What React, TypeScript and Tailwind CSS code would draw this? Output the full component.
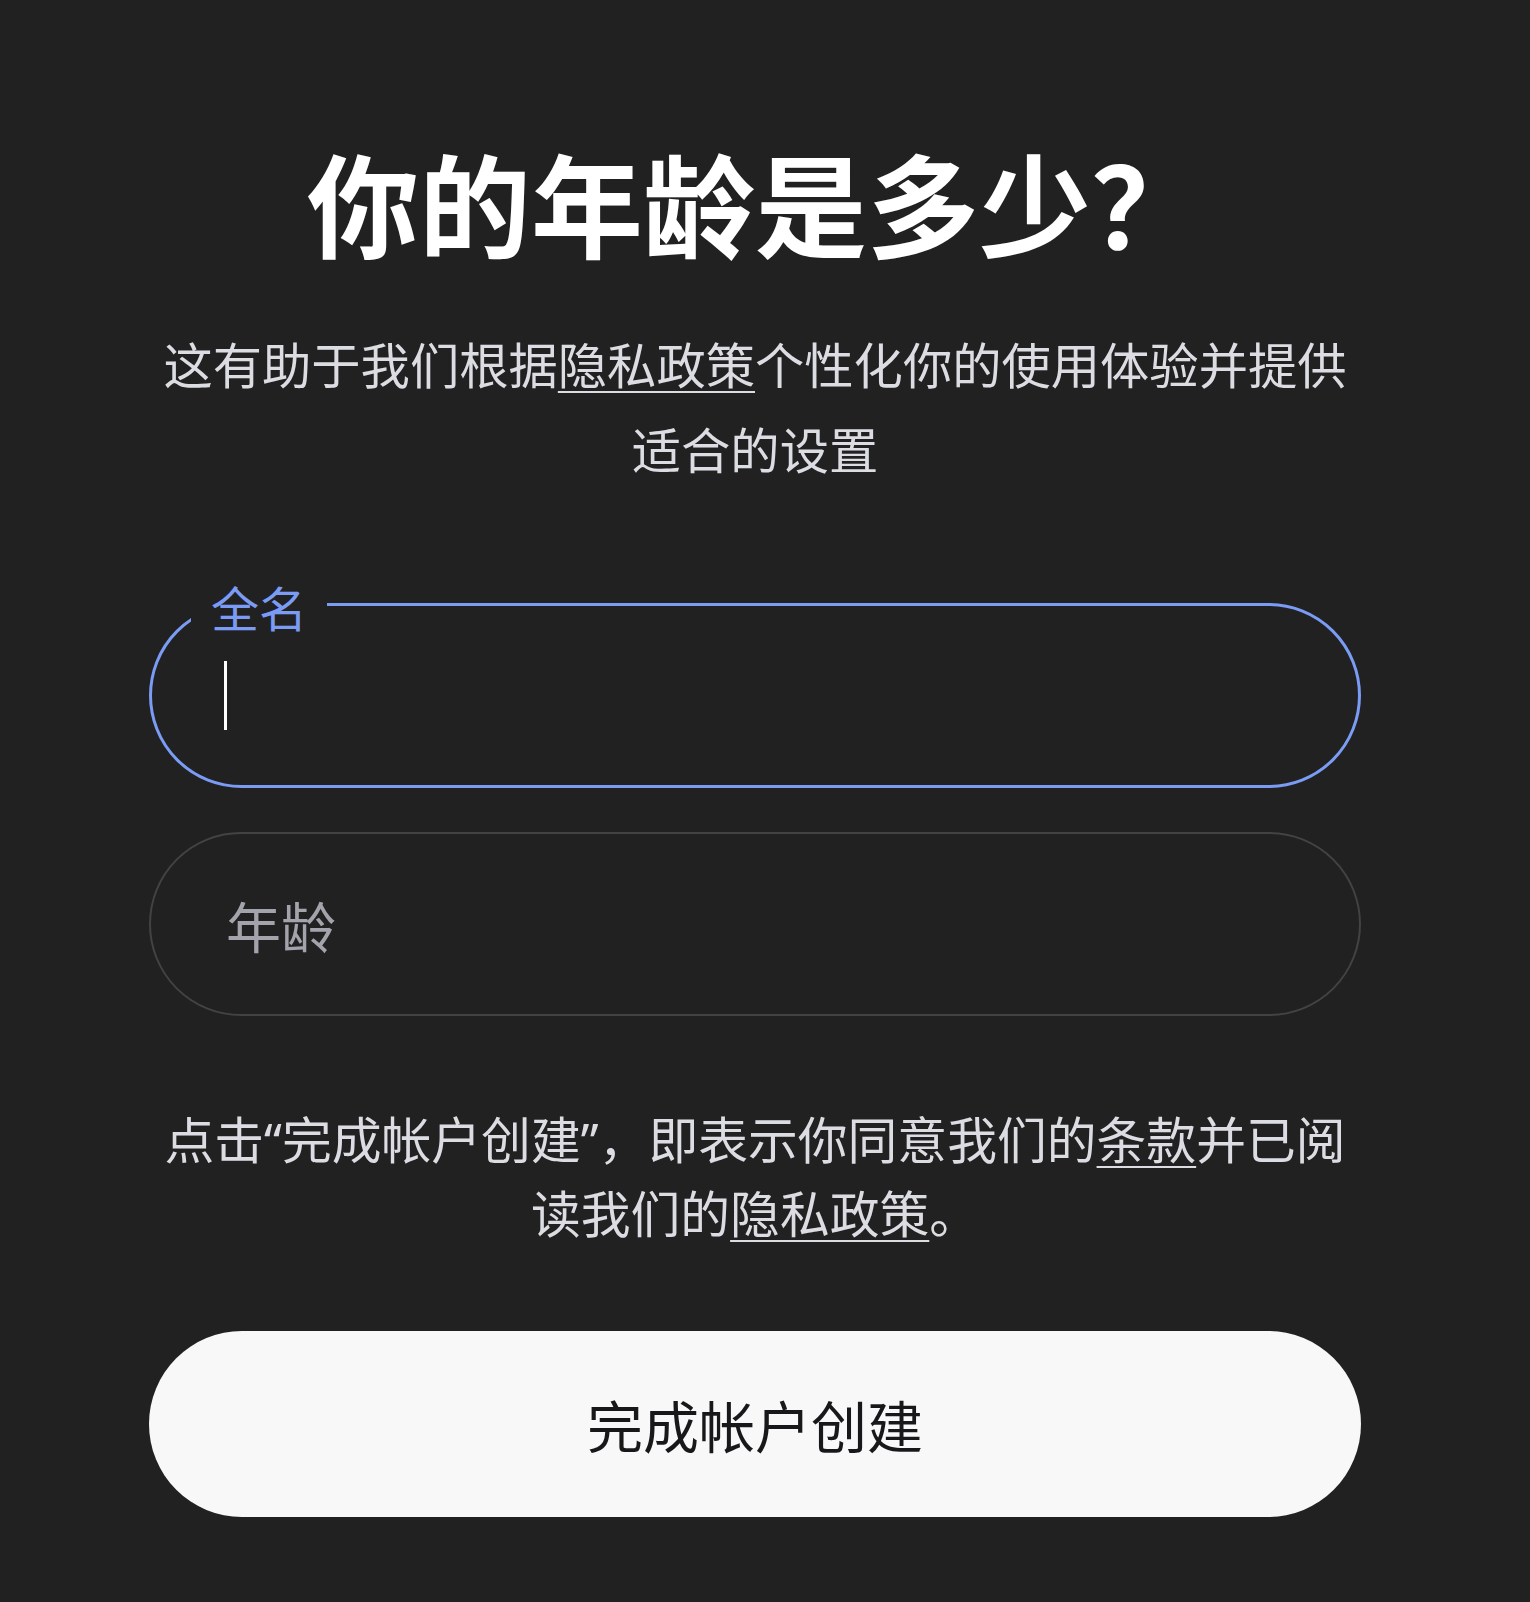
export default function App() {
  const font = { fontFamily: '"Noto Sans CJK SC", "Noto Sans", sans-serif' };
  const q = "font-['Noto_Sans',sans-serif]";
  return (
    <div className="min-h-screen w-full bg-[#212121] flex justify-center pr-[20px]" style={font}>
      <div className="w-[1212px] flex flex-col">
        <h1 className="mt-[145px] text-center text-[112px] leading-none font-bold text-white whitespace-nowrap">
          你的年龄是多少？
        </h1>
        <p className="mt-[63px] text-center text-[49.3px] leading-[85px] text-[#dcdde3] whitespace-nowrap">
          这有助于我们根据<span className="underline underline-offset-[7px] decoration-[2px]">隐私政策</span>个性化你的使用体验并提供
          <br />
          适合的设置
        </p>

        <div className="mt-[113px] relative h-[185px] rounded-full border-[3px] border-[#7b9cf4] flex items-center">
          <span className="absolute left-[39px] top-[-24px] px-5 bg-[#212121] text-[48px] leading-none text-[#7b9cf4]">
            全名
          </span>
          <div className="ml-[72px] w-[3px] h-[69px] bg-white" />
        </div>

        <div className="mt-[44px] h-[184px] rounded-full border-2 border-[#434343] flex items-center pl-[75px]">
          <span className="text-[55px] leading-none text-[#a3a4ab]">年龄</span>
        </div>

        <p className="mt-[86px] text-center text-[49.8px] leading-[71px] text-[#dcdde3] whitespace-nowrap">
          点击<span className={q}>“</span>完成帐户创建<span className={q}>”</span>，即表示你同意我们的<span className="underline underline-offset-[7px] decoration-[2px]">条款</span>并已阅
          <br />
          读我们的<span className="underline underline-offset-[7px] decoration-[2px]">隐私政策</span>。
        </p>

        <button className="mt-[84px] h-[186px] w-full rounded-full bg-[#f8f8f8] flex items-center justify-center text-[56px] leading-none text-[#18181b]">
          完成帐户创建
        </button>
      </div>
    </div>
  );
}
